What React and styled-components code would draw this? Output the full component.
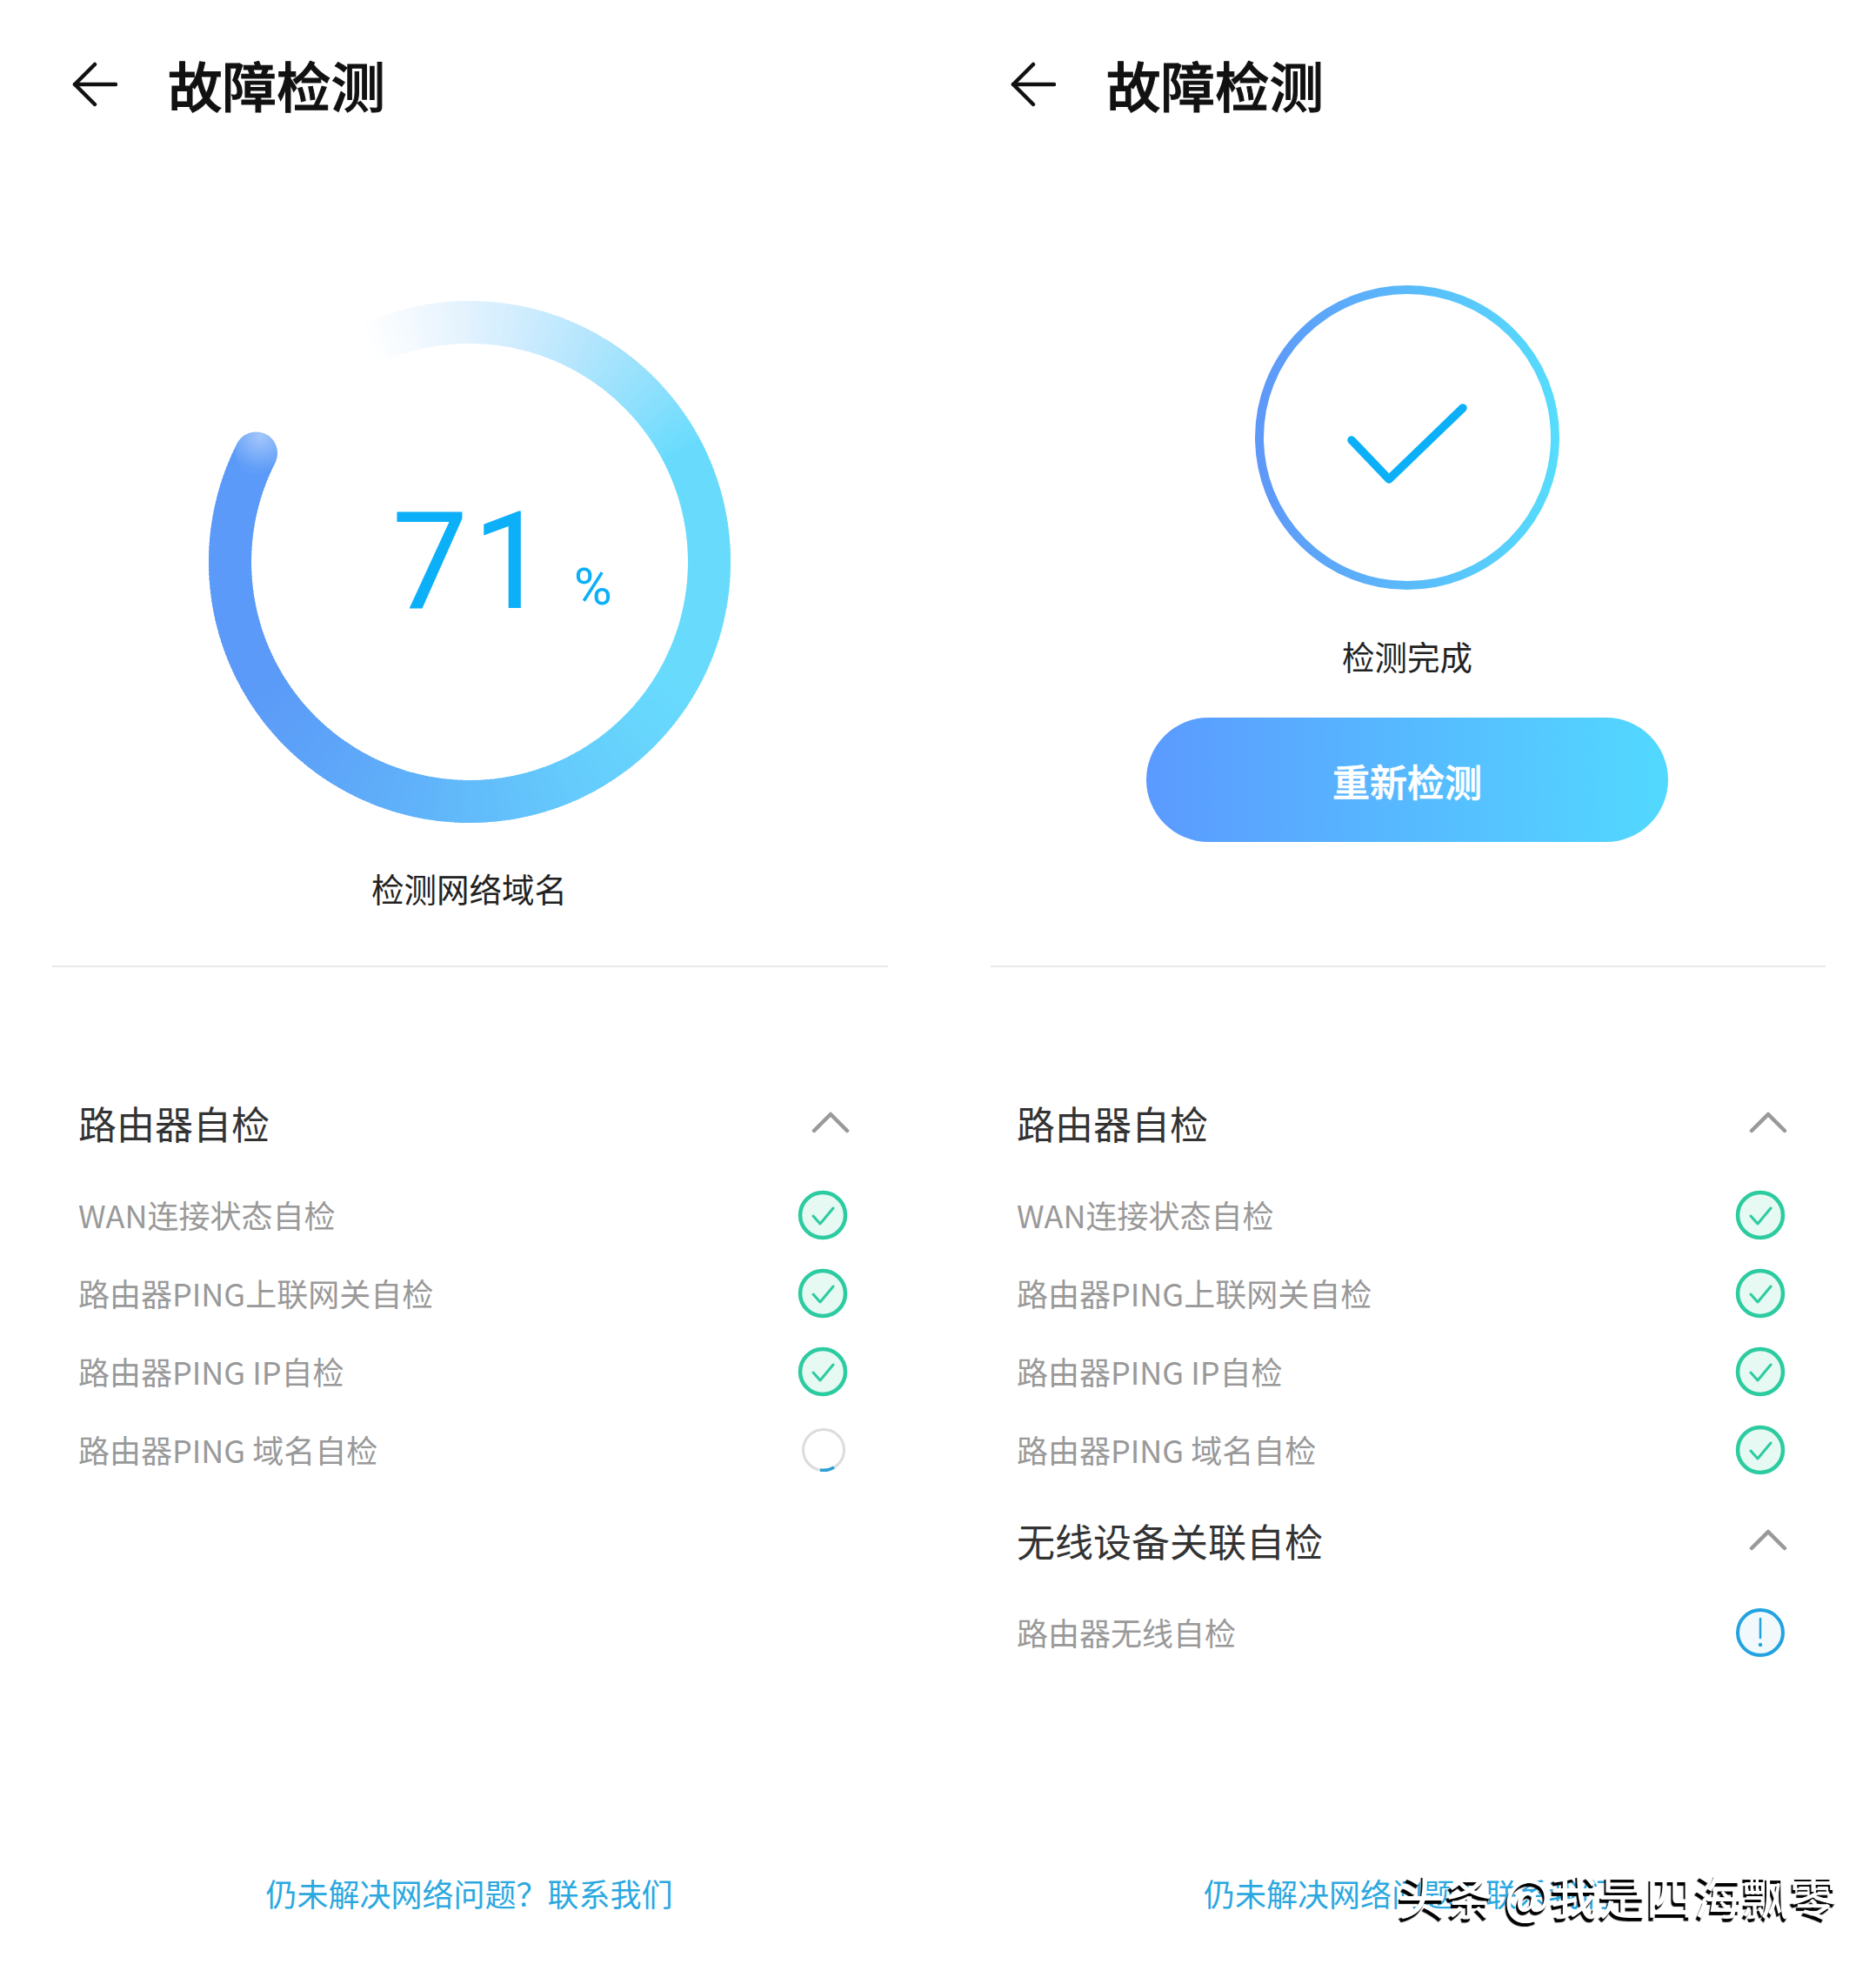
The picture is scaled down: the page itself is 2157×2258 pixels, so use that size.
import React from 'react'
import styled, {createGlobalStyle} from 'styled-components'

const GlobalStyle = createGlobalStyle`
    html, body {
        margin: 0;
        padding: 0;
        background: #fff;
    }
    body {
        font-family: "Noto Sans CJK SC", "Noto Sans", Roboto, sans-serif;
    }
`

const Page = styled.div`
    position: relative;
    display: grid;
    grid-template-columns: 1079px 1078px;
    width: 2157px;
    height: 2258px;
    overflow: hidden;
    background: #fff;
`

const Panel = styled.div`
    display: flex;
    flex-direction: column;
    height: 2258px;
`

const Header = styled.div`
    display: flex;
    align-items: center;
    height: 196px;
    padding-left: 83px;
    box-sizing: border-box;
`

const BackIcon = styled.svg`
    width: 52px;
    height: 52px;
    margin-right: 58px;
    margin-top: -2px;
    flex-shrink: 0;
`

const Title = styled.h1`
    margin: 0;
    padding-bottom: 3px;
    font-size: 62.5px;
    line-height: 80px;
    font-weight: 500;
    color: #111;
    -webkit-text-stroke: 1px #111;
`

const Hero = styled.div`
    display: flex;
    flex-direction: column;
    align-items: center;
    height: 914px;
    box-sizing: border-box;
    padding-top: ${props => props.$top}px;
`

const RingBox = styled.div`
    position: relative;
    width: 600px;
    height: 600px;
`

const RingSvg = styled.svg`
    display: block;
    width: 600px;
    height: 600px;
`

const Percent = styled.div`
    position: absolute;
    top: 244px;
    left: 211px;
    display: flex;
    align-items: baseline;
    font-family: Roboto, sans-serif;
    color: #0cb0f8;
`

const PercentValue = styled.span`
    font-size: 156px;
    line-height: 112px;
    font-weight: 400;
    letter-spacing: 5px;
`

const PercentUnit = styled.span`
    position: relative;
    top: -4px;
    font-size: 60px;
    line-height: 50px;
    margin-left: 24px;
    font-weight: 400;
`

const DoneSvg = styled.svg`
    display: block;
    width: 350px;
    height: 350px;
`

const StatusText = styled.div`
    margin-top: ${props => props.$gap}px;
    padding-bottom: 3px;
    font-size: 37.5px;
    line-height: 47px;
    color: #222;
`

const RetryButton = styled.button`
    display: flex;
    align-items: center;
    justify-content: center;
    width: 600px;
    height: 143px;
    margin-top: 45px;
    padding: 0;
    border: none;
    border-radius: 72px;
    background: linear-gradient(90deg, #5b9aff 0%, #52d9ff 100%);
    font-family: inherit;
    font-size: 43px;
    font-weight: 500;
    color: #fff;
    -webkit-text-stroke: 0.7px #fff;
`

const Divider = styled.div`
    height: 2px;
    margin: 0 58px 0 60px;
    background: #e8e8e8;
`

const Sections = styled.div`
    display: flex;
    flex-direction: column;
    padding: 151px 102px 0 90px;
    gap: 30px;
`

const Section = styled.section`
    display: flex;
    flex-direction: column;
    gap: 30px;
`

const SectionHead = styled.div`
    display: flex;
    align-items: center;
    justify-content: space-between;
    height: 60px;
`

const SectionTitle = styled.h2`
    margin: 0;
    padding-bottom: 3px;
    font-size: 44px;
    line-height: 57px;
    font-weight: 400;
    color: #333;
`

const Chevron = styled.svg`
    width: 44px;
    height: 26px;
    margin-top: -6px;
`

const Rows = styled.div`
    display: flex;
    flex-direction: column;
`

const Row = styled.div`
    display: flex;
    align-items: center;
    justify-content: space-between;
    height: 90px;
    padding-right: 2px;
`

const RowLabel = styled.span`
    padding-bottom: 3px;
    font-size: 36px;
    line-height: 47px;
    color: #999;
`

const StatusIcon = styled.svg`
    width: 58px;
    height: 58px;
    margin-top: -2px;
`

const Footer = styled.div`
    margin-top: auto;
    padding-bottom: 57px;
    text-align: center;
    font-size: 36px;
    line-height: 50px;
    color: #2ba8e0;
`

const Watermark = styled.div`
    position: absolute;
    left: 1607px;
    top: 2139px;
    font-size: 55px;
    line-height: 76px;
    font-weight: 500;
    white-space: nowrap;
    color: #fff;
    text-shadow: -2px 4px 1px #000;
`

const CENTER = 300
const RADIUS = 275.5
const START = -26
const END = 297
const SOLID_AT = 62

const hexToRgb = hex => [1, 3, 5].map(i => parseInt(hex.slice(i, i + 2), 16))

const pointAt = deg => {
    const rad = (deg * Math.PI) / 180
    return [CENTER + RADIUS * Math.sin(rad), CENTER - RADIUS * Math.cos(rad)]
}

// the ring runs blue on the left to cyan on the right and fades into the white page at its tail
const ringColor = deg => {
    const x = pointAt(deg)[0] / 600
    const from = hexToRgb('#5b9af8')
    const to = hexToRgb('#68dbfd')
    const mix = Math.min(1, Math.max(0, (x - 0.1) / 0.8))
    const fade = Math.min(1, (deg - START) / (SOLID_AT - START))
    const alpha = fade * fade * 0.5 + fade * 0.5
    const rgb = from.map((c, i) => {
        const value = c + (to[i] - c) * mix
        return Math.round(255 + (value - 255) * alpha)
    })
    return `rgb(${rgb.join(',')})`
}

const ringSegments = () => {
    const segments = []
    for (let deg = START; deg < END; deg += 1) {
        const [x1, y1] = pointAt(deg)
        const [x2, y2] = pointAt(deg + 1.5)
        segments.push(
            <path
                key={deg}
                d={`M${x1} ${y1} A${RADIUS} ${RADIUS} 0 0 1 ${x2} ${y2}`}
                fill="none"
                stroke={ringColor(deg)}
                strokeWidth="49"
            />
        )
    }
    return segments
}

const ProgressRing = () => {
    const [hx, hy] = pointAt(END)
    return (
        <RingBox>
            <RingSvg viewBox="0 0 600 600">
                <defs>
                    <radialGradient id="capGlow" cx="0.6" cy="0.1" r="0.8">
                        <stop offset="0" stopColor="#a3c6fb" />
                        <stop offset="1" stopColor="#5f9df8" />
                    </radialGradient>
                </defs>
                {ringSegments()}
                <circle cx={hx} cy={hy} r="24.5" fill="url(#capGlow)" />
            </RingSvg>
            <Percent>
                <PercentValue>71</PercentValue>
                <PercentUnit>%</PercentUnit>
            </Percent>
        </RingBox>
    )
}

const DoneBadge = () => (
    <DoneSvg viewBox="0 0 350 350">
        <defs>
            <linearGradient id="doneStroke" x1="0" y1="0" x2="1" y2="0">
                <stop offset="0" stopColor="#5e98f8" />
                <stop offset="1" stopColor="#56dcfd" />
            </linearGradient>
        </defs>
        <circle cx="175" cy="175" r="170" fill="none" stroke="url(#doneStroke)" strokeWidth="10" />
        <path
            d="M111 178 L154 223 L239 141"
            fill="none"
            stroke="#0cb0f8"
            strokeWidth="9.5"
            strokeLinecap="round"
            strokeLinejoin="round"
        />
    </DoneSvg>
)

const ArrowBack = () => (
    <BackIcon viewBox="0 0 52 52" fill="none" stroke="#111" strokeWidth="4.5" strokeLinecap="round" strokeLinejoin="round">
        <path d="M50 26 H3" />
        <path d="M26 3 L3 26 L26 49" />
    </BackIcon>
)

const ChevronUp = () => (
    <Chevron viewBox="0 0 44 26" fill="none" stroke="#999" strokeWidth="4.5" strokeLinecap="round" strokeLinejoin="round">
        <path d="M3 23 L22 4 L41 23" />
    </Chevron>
)

const CheckIcon = () => (
    <StatusIcon viewBox="0 0 58 58">
        <circle cx="29" cy="29" r="26" fill="#e6f9f3" stroke="#2ccba0" strokeWidth="4.5" />
        <path d="M18 30 L26 39 L41 21" fill="none" stroke="#2ccba0" strokeWidth="3" strokeLinecap="round" strokeLinejoin="round" />
    </StatusIcon>
)

const SpinnerIcon = () => (
    <StatusIcon viewBox="0 0 58 58">
        <circle cx="30" cy="29" r="23.5" fill="none" stroke="#dcdcdc" strokeWidth="3" />
        <path d="M26 52 A23.5 23.5 0 0 0 42 49" fill="none" stroke="#2b9fd6" strokeWidth="3.5" />
    </StatusIcon>
)

const AlertIcon = () => (
    <StatusIcon viewBox="0 0 58 58">
        <circle cx="29" cy="29" r="26" fill="#f1f9fd" stroke="#22a3e0" strokeWidth="4" />
        <path d="M29 13 V35" fill="none" stroke="#22a3e0" strokeWidth="2.5" strokeLinecap="round" />
        <circle cx="29" cy="43" r="2.2" fill="#22a3e0" />
    </StatusIcon>
)

const ICONS = {
    check: CheckIcon,
    spin: SpinnerIcon,
    alert: AlertIcon,
}

const routerRows = last => [
    {label: 'WAN连接状态自检', icon: 'check'},
    {label: '路由器PING上联网关自检', icon: 'check'},
    {label: '路由器PING IP自检', icon: 'check'},
    {label: '路由器PING 域名自检', icon: last},
]

const CheckSection = ({title, rows}) => (
    <Section>
        <SectionHead>
            <SectionTitle>{title}</SectionTitle>
            <ChevronUp />
        </SectionHead>
        <Rows>
            {rows.map(row => {
                const Icon = ICONS[row.icon]
                return (
                    <Row key={row.label}>
                        <RowLabel>{row.label}</RowLabel>
                        <Icon />
                    </Row>
                )
            })}
        </Rows>
    </Section>
)

const App = () => {
    return (
        <Page>
            <GlobalStyle />
            <Panel>
                <Header>
                    <ArrowBack />
                    <Title>故障检测</Title>
                </Header>
                <Hero $top={150}>
                    <ProgressRing />
                    <StatusText $gap={51}>检测网络域名</StatusText>
                </Hero>
                <Divider />
                <Sections>
                    <CheckSection title="路由器自检" rows={routerRows('spin')} />
                </Sections>
                <Footer>仍未解决网络问题？联系我们</Footer>
            </Panel>
            <Panel>
                <Header>
                    <ArrowBack />
                    <Title>故障检测</Title>
                </Header>
                <Hero $top={132}>
                    <DoneBadge />
                    <StatusText $gap={52}>检测完成</StatusText>
                    <RetryButton>重新检测</RetryButton>
                </Hero>
                <Divider />
                <Sections>
                    <CheckSection title="路由器自检" rows={routerRows('check')} />
                    <CheckSection title="无线设备关联自检" rows={[{label: '路由器无线自检', icon: 'alert'}]} />
                </Sections>
                <Footer>仍未解决网络问题？联系我们</Footer>
            </Panel>
            <Watermark>头条 @我是四海飘零</Watermark>
        </Page>
    )
}

export default App
